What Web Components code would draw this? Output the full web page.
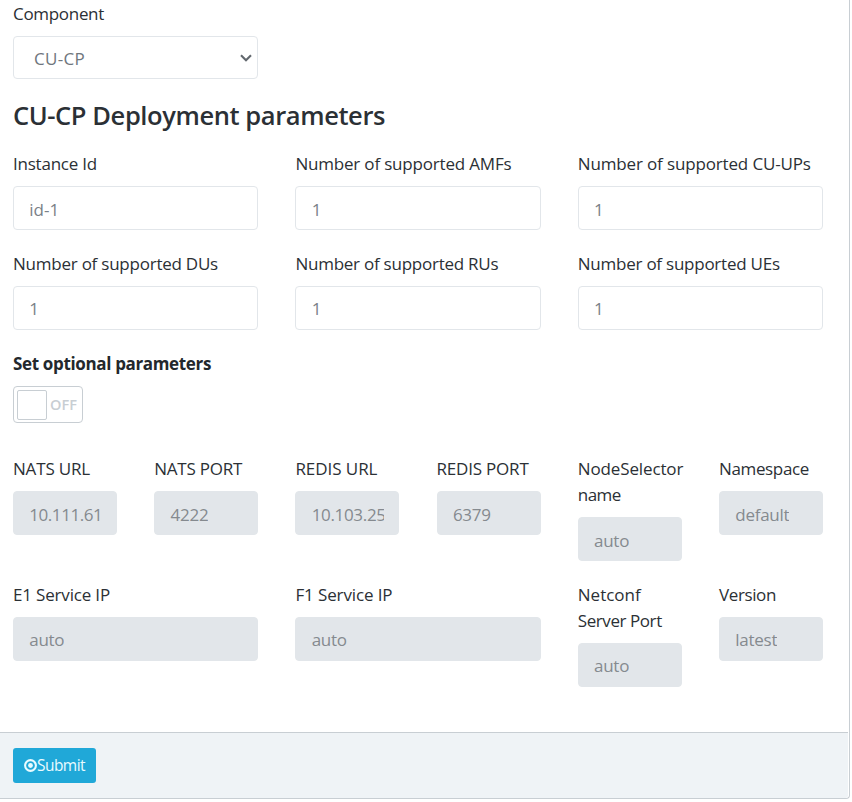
<!DOCTYPE html>
<html lang="en">
<head>
<meta charset="utf-8">
<title>CU-CP Deployment</title>
<style>
html, body { margin: 0; height: 100%; background: #fff; overflow: hidden; }
body { font: 17px/26px "Open Sans", "Noto Sans", sans-serif; color: #2b3035; }
</style>
</head>
<body>
<deploy-card>
  <form-field class="component" label="Component" lw="91" value="CU-CP" vw="51" kind="select"></form-field>
  <section-title></section-title>
  <field-grid>
    <form-field label="Instance Id" lw="84" value="id-1" vw="30"></form-field>
    <form-field label="Number of supported AMFs" lw="216" value="1"></form-field>
    <form-field label="Number of supported CU-UPs" lw="233" value="1"></form-field>
    <form-field class="raised" label="Number of supported DUs" lw="205" value="1"></form-field>
    <form-field class="raised" label="Number of supported RUs" lw="203" value="1"></form-field>
    <form-field class="raised" label="Number of supported UEs" lw="202" value="1"></form-field>
  </field-grid>
  <option-switch></option-switch>
  <field-grid>
    <form-field span="1" kind="off" label="NATS URL" lw="77" value="10.111.61" vw="73"></form-field>
    <form-field span="1" kind="off" label="NATS PORT" lw="88" value="4222" vw="38"></form-field>
    <form-field span="1" kind="off" label="REDIS URL" lw="82" value="10.103.25" vw="74"></form-field>
    <form-field span="1" kind="off" label="REDIS PORT" lw="92" value="6379" vw="38"></form-field>
    <form-field span="1" kind="off" label="NodeSelector|name" lw="105.5|43" value="auto" vw="35"></form-field>
    <form-field span="1" kind="off" label="Namespace" lw="90" value="default" vw="54"></form-field>
    <form-field class="raised" kind="off" label="E1 Service IP" lw="97" value="auto" vw="35"></form-field>
    <form-field class="raised" kind="off" label="F1 Service IP" lw="97" value="auto" vw="35"></form-field>
    <form-field class="raised" span="1" kind="off" label="Netconf|Server Port" lw="63|84" value="auto" vw="35"></form-field>
    <form-field class="raised" span="1" kind="off" label="Version" lw="57" value="latest" vw="42"></form-field>
  </field-grid>
  <submit-button slot="footer"></submit-button>
</deploy-card>
<script>
/* A single line of text tracked so that it spans the width given in "w". */
class FitText extends HTMLElement {
  connectedCallback() {
    if (this.shadowRoot) return;
    this.attachShadow({ mode: 'open' }).innerHTML =
      '<style>:host{display:block;white-space:nowrap}span{display:inline-block}</style><span><slot></slot></span>';
    const w = parseFloat(this.getAttribute('w'));
    const n = this.textContent.length;
    if (!w || n < 2) return;
    const span = this.shadowRoot.querySelector('span');
    span.style.letterSpacing = ((w - span.getBoundingClientRect().width) / n).toFixed(3) + 'px';
  }
}
customElements.define('fit-text', FitText);

customElements.define('deploy-card', class extends HTMLElement {
  constructor() {
    super();
    this.attachShadow({ mode: 'open' }).innerHTML = `
      <style>
        :host { display: flex; flex-direction: column; box-sizing: border-box; width: 850px; height: 799px;
          border: 1px solid #c8ced3; border-top: 0; border-left: 0; border-radius: 0 0 4px 0; background: #fff; }
        main { flex: 1; padding: 1px 26px 0 13px; }
        footer { box-sizing: border-box; height: 66px; padding: 15px 13px; background: #eff3f6;
          border-top: 1px solid #c8ced3; margin-right: 1px; border-radius: 0 0 3px 0; }
      </style>
      <main><slot></slot></main><footer><slot name="footer"></slot></footer>`;
  }
});

customElements.define('section-title', class extends HTMLElement {
  connectedCallback() {
    this.attachShadow({ mode: 'open' }).innerHTML = `
      <style>:host { display: block; margin: 20px 0; font-size: 25.5px; line-height: 32px; font-weight: 600; }</style>
      <fit-text w="372">CU-CP Deployment parameters</fit-text>`;
  }
});

customElements.define('field-grid', class extends HTMLElement {
  constructor() {
    super();
    this.attachShadow({ mode: 'open' }).innerHTML = `
      <style>:host { display: grid; grid-template-columns: repeat(6, 1fr); gap: 21px 37.2px; align-items: start; }</style>
      <slot></slot>`;
  }
});

customElements.define('form-field', class extends HTMLElement {
  connectedCallback() {
    const a = (n) => this.getAttribute(n) || '';
    const kind = a('kind');
    const widths = a('lw').split('|');
    const labels = a('label').split('|').map((t, i) => `<fit-text w="${widths[i]}">${t}</fit-text>`).join('');
    const arrow = kind === 'select'
      ? '<svg width="14" height="10" viewBox="0 0 14 10"><path d="M2 2.2 7 7.2 12 2.2" fill="none" stroke="#62686e" stroke-width="2.1"/></svg>' : '';
    this.attachShadow({ mode: 'open' }).innerHTML = `
      <style>
        :host { display: block; grid-column: span ${a('span') || 2}; min-width: 0; }
        :host(.component) { width: 245px; }
        .label { margin-bottom: 9px; }
        .box { display: flex; align-items: center; justify-content: space-between; box-sizing: border-box;
          height: 44px; padding: 3px 14px 0 15.3px; border: 1px solid #e2e6ea; border-radius: 4px; background: #fff; color: #7a8188; }
        :host(.raised) .box { padding-top: 1px; }
        .box.select { height: 43px; padding: 2px 4px 0 20px; color: #6f767d; }
        .box.off { background: #e2e6ea; color: #858a8f; }
        .value { overflow: hidden; }
        svg { margin-top: -2px; }
      </style>
      <div class="label">${labels}</div>
      <div class="box ${kind}"><fit-text class="value" w="${a('vw')}">${a('value')}</fit-text>${arrow}</div>`;
  }
});

customElements.define('option-switch', class extends HTMLElement {
  connectedCallback() {
    this.attachShadow({ mode: 'open' }).innerHTML = `
      <style>
        :host { display: block; margin: 21px 0 33px; color: #23282c; }
        .title { font-weight: 700; margin-bottom: 9px; }
        .switch { display: flex; align-items: center; box-sizing: border-box; width: 70px; height: 37px; padding: 0 3px;
          border: 1px solid #c8ced3; border-radius: 4px; gap: 3px; }
        .knob { box-sizing: border-box; width: 30px; height: 30px; border: 1px solid #c8ced3; border-radius: 2px; }
        .off { font-size: 14.5px; font-weight: 600; color: #c8ced3; }
      </style>
      <div class="title"><fit-text w="198">Set optional parameters</fit-text></div>
      <div class="switch"><div class="knob"></div><fit-text class="off" w="27">OFF</fit-text></div>`;
  }
});

customElements.define('submit-button', class extends HTMLElement {
  connectedCallback() {
    this.attachShadow({ mode: 'open' }).innerHTML = `
      <style>
        :host { display: flex; align-items: center; box-sizing: border-box; width: 83px; height: 35px; padding-left: 11px;
          border-radius: 3px; background: #20a8d8; color: #e9fbff; font-size: 15.5px; line-height: 22px; }
        fit-text { margin-top: -1px; }
      </style>
      <svg width="13" height="13" viewBox="0 0 13 13"><circle cx="6.5" cy="6.5" r="5.4" fill="none" stroke="#e9fbff" stroke-width="2.1"/><circle cx="6.5" cy="6.5" r="2.4" fill="#e9fbff"/></svg>
      <fit-text w="48">Submit</fit-text>`;
  }
});
</script>
</body>
</html>
